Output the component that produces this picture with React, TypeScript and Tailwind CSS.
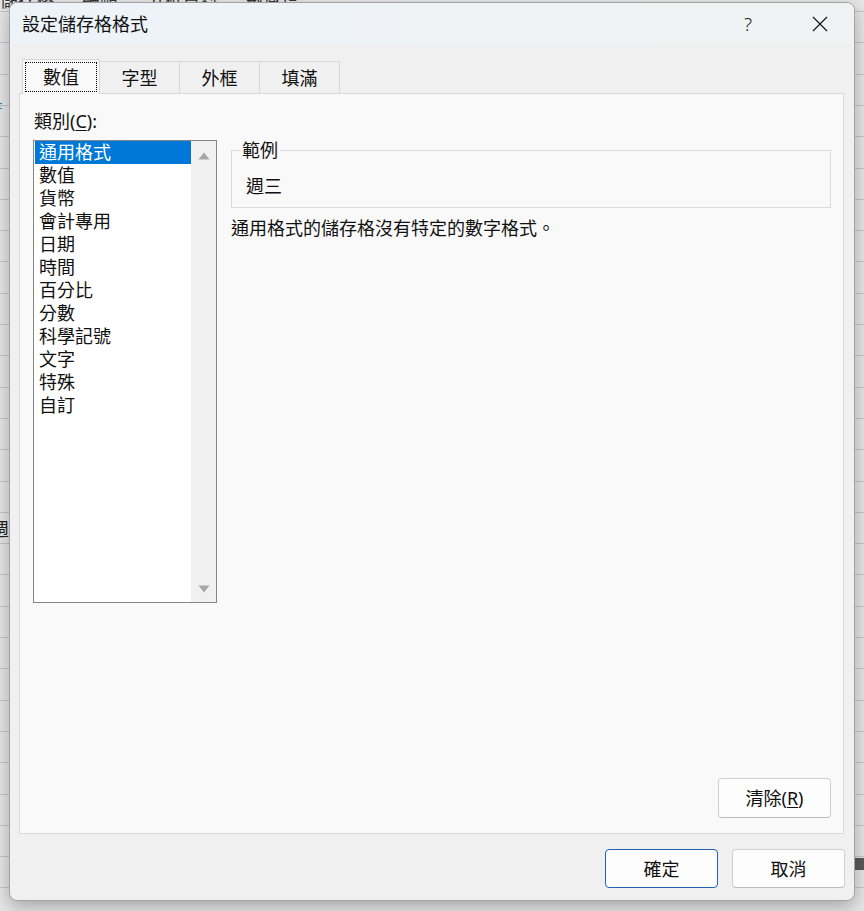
import React from 'react';

const categories = ['通用格式', '數值', '貨幣', '會計專用', '日期', '時間', '百分比', '分數', '科學記號', '文字', '特殊', '自訂'];
const tabs = ['字型', '外框', '填滿'];

const font = { fontFamily: '"Noto Sans", "Noto Sans CJK TC", sans-serif' };

export default function App() {
  return (
    <div
      className="relative w-[864px] h-[911px] overflow-hidden bg-[#e6e6e6] text-[#111]"
      style={font}
    >
      {/* Spreadsheet behind the dialog */}
      <div className="absolute inset-0 bg-[repeating-linear-gradient(to_bottom,transparent_0px,transparent_11px,#c4c4c4_11px,#c4c4c4_12px,transparent_12px,transparent_31.3px)]" />
      <div className="absolute left-0 top-[-13px] whitespace-nowrap text-[18px] text-[#333]">
        儲存格 &nbsp;&nbsp;&nbsp;&nbsp; 編輯 &nbsp;&nbsp;&nbsp;&nbsp; 分析資料 &nbsp;&nbsp;&nbsp;&nbsp; 敏感度
      </div>
      <div className="absolute left-[-8px] top-[92px] text-[18px] text-[#3b82c4]">⌗</div>
      <div className="absolute left-[-9px] top-[516px] text-[18px] text-[#222]">週</div>
      <div className="absolute right-0 top-[858px] w-[10px] h-[12px] bg-[#5a5a5a]" />

      {/* Dialog window */}
      <div className="absolute left-[9px] top-[2px] w-[846px] h-[899px] flex flex-col rounded-[8px] border border-[#a3a3a3] bg-[#f0f0f0] shadow-[0_6px_18px_rgba(0,0,0,0.28)] overflow-hidden">
        {/* Title bar */}
        <div className="h-[42px] flex items-center pl-[12px] bg-gradient-to-r from-[#edf3f9] to-[#f0f3f3]">
          <span className="text-[18px] leading-[24px]">設定儲存格格式</span>
          <span className="ml-auto mr-[60px] text-[19px] leading-[24px] font-light text-[#222]">?</span>
          <svg className="mr-[26px]" width="16" height="16" viewBox="0 0 16 16">
            <path d="M1 1 L15 15 M15 1 L1 15" stroke="#1a1a1a" strokeWidth="1.3" fill="none" />
          </svg>
        </div>

        <div className="flex-1 flex flex-col pl-[9px] pt-[14px]">
          {/* Tabs */}
          <div className="flex items-end h-[34px] pl-[3px]">
            <div className="relative z-10 -mb-px w-[78px] h-[35px] flex items-center justify-center border border-b-0 border-[#d6d6d6] bg-[#f9f9f9]">
              <div className="absolute inset-x-[2px] top-[2px] bottom-[2px] border border-dotted border-black" />
              <span className="text-[18px] leading-[24px]">數值</span>
            </div>
            {tabs.map((t) => (
              <div
                key={t}
                className="w-[80px] h-[32px] flex items-center justify-center border-t border-r border-[#d9d9d9] bg-[#f0f0f0]"
              >
                <span className="text-[18px] leading-[24px]">{t}</span>
              </div>
            ))}
          </div>

          {/* Tab panel */}
          <div className="w-[825px] h-[741px] flex border border-[#d9d9d9] bg-[#f9f9f9]">
            <div className="flex flex-col pl-[13px] pt-[15px]">
              <span className="text-[18px] leading-[24px] pl-[1px]">
                類別(<span className="underline underline-offset-2">C</span>):
              </span>
              <div className="mt-[7px] w-[184px] h-[463px] flex border border-[#858585] bg-white">
                <div className="flex-1 flex flex-col pl-[1px]">
                  {categories.map((c, i) => (
                    <div
                      key={c}
                      className={
                        i === 0
                          ? 'h-[23px] flex items-center pl-[4px] bg-[#0078d7] text-white text-[18px] leading-[23px]'
                          : 'h-[23px] flex items-center pl-[4px] text-[18px] leading-[23px]'
                      }
                    >
                      {c}
                    </div>
                  ))}
                </div>
                <div className="w-[25px] flex flex-col items-center justify-between bg-[#f0f0f0] pt-[11px] pb-[9px]">
                  <svg width="12" height="8" viewBox="0 0 12 8">
                    <path d="M6 0.5 L11.5 7.5 L0.5 7.5 Z" fill="#a6a6a6" />
                  </svg>
                  <svg width="12" height="8" viewBox="0 0 12 8">
                    <path d="M0.5 0.5 L11.5 0.5 L6 7.5 Z" fill="#a6a6a6" />
                  </svg>
                </div>
              </div>
            </div>

            <div className="flex-1 flex flex-col pl-[14px] pr-[12px] pt-[56px] pb-[15px]">
              <div className="relative h-[58px] border border-[#dcdcdc] flex items-end pl-[14px] pb-[9px]">
                <span className="absolute left-[8px] top-[-13px] px-[2px] bg-[#f9f9f9] text-[18px] leading-[24px]">範例</span>
                <span className="text-[18px] leading-[24px]">週三</span>
              </div>
              <p className="mt-[8px] text-[18px] leading-[24px]">通用格式的儲存格沒有特定的數字格式。</p>
              <button className="mt-auto self-end w-[113px] h-[40px] rounded-[4px] border border-[#d0d0d0] border-b-[#bcbcbc] bg-[#fdfdfd] text-[18px] leading-[24px]">
                清除(<span className="underline underline-offset-2">R</span>)
              </button>
            </div>
          </div>

          {/* Footer buttons */}
          <div className="flex justify-end gap-[14px] pr-[9px] mt-[15px]">
            <button className="w-[113px] h-[39px] rounded-[4px] border border-[#1f64b3] bg-[#fdfdfd] text-[18px] leading-[24px]">
              確定
            </button>
            <button className="w-[113px] h-[39px] rounded-[4px] border border-[#d0d0d0] border-b-[#bcbcbc] bg-[#fdfdfd] text-[18px] leading-[24px]">
              取消
            </button>
          </div>
        </div>
      </div>
    </div>
  );
}
